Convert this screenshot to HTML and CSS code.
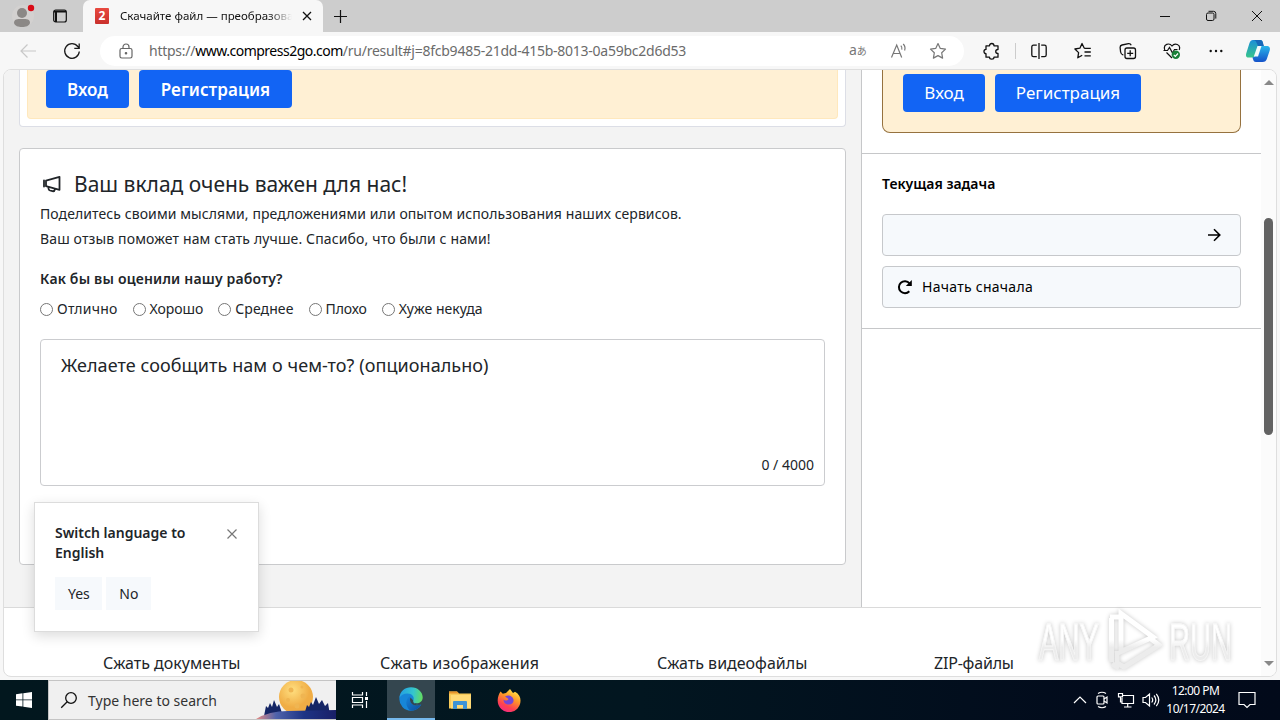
FILE: index.html
```html
<!DOCTYPE html>
<html lang="ru">
<head>
<meta charset="utf-8">
<meta name="viewport" content="width=device-width, initial-scale=1.0">
<title>Скачайте файл</title>
<link rel="stylesheet" href="styles.css">
</head>
<body>

<div class="desktop">

<!-- tab strip -->
<header class="tabs">
    <div class="tabs_left">
        <svg class="avatar" width="24" height="24" viewBox="0 0 24 24"><circle cx="12" cy="12" r="11" fill="#d3d1d0"/><circle cx="11" cy="9" r="5" fill="#8b8886"/><path d="M3 19c0-4 3-4 8-4s8 0 8 4c-1 3-4 4-8 4s-7-1-8-4z" fill="#8b8886"/><circle cx="20" cy="4" r="3.2" fill="#d90b16"/></svg>
        <svg width="16" height="16" viewBox="0 0 16 16" fill="none" stroke="#111" stroke-width="1.2"><rect x="1.700" y="2" width="12.600" height="12" rx="2"/><path d="M2 3.500h12M4 4v10" stroke-width="2"/></svg>
    </div>
    <div class="tab">
        <span class="favicon">2</span>
        <span class="tab_title">Скачайте файл — преобразова</span>
        <svg width="10" height="10" viewBox="0 0 10 10" stroke="#111" stroke-width="1.300"><path d="M1 1l8 8M9 1l-8 8"/></svg>
    </div>
    <svg class="tab_new" width="15" height="15" viewBox="0 0 15 15" stroke="#111" stroke-width="1.200"><path d="M7.500 1v13M1 7.500h13"/></svg>
    <div class="window_buttons">
        <svg width="12" height="12" viewBox="0 0 12 12" stroke="#111" fill="none"><path d="M1 6.500h10"/></svg>
        <svg width="12" height="12" viewBox="0 0 12 12" stroke="#111" fill="none"><rect x="1.500" y="3" width="7.500" height="7.500" rx="1.500"/><path d="M3.500 1.300h5q2.300 0 2.300 2.300v5"/></svg>
        <svg width="12" height="12" viewBox="0 0 12 12" stroke="#111" fill="none"><path d="M1 1l10 10M11 1L1 11"/></svg>
    </div>
</header>

<!-- toolbar -->
<div class="toolbar">
    <svg class="back" width="18" height="16" viewBox="0 0 18 16" fill="none" stroke="#c8c8c8" stroke-width="1.200"><path d="M17 8H2M8.500 1.500L2 8l6.500 6.500"/></svg>
    <svg class="reload" width="18" height="18" viewBox="0 0 18 18" fill="none" stroke="#1a1a1a" stroke-width="1.300"><path d="M16.300 9.500A7.300 7.300 0 1 1 14.800 4.500L16 6.200M16.200 1.500v4.900h-4.900"/></svg>
    <div class="address">
        <svg class="lock" width="14" height="16" viewBox="0 0 14 16" fill="none" stroke="#666" stroke-width="1.200"><rect x="1" y="5.500" width="12" height="9.500" rx="1.700"/><path d="M4 5.500V4a3 3 0 0 1 6 0v1.500"/><circle cx="7" cy="10.200" r=".7" fill="#666"/></svg>
        <span class="url">https://<b>www.compress2go.com</b>/ru/result#j=8fcb9485-21dd-415b-8013-0a59bc2d6d53</span>
        <span class="translate">a<small>あ</small></span>
        <svg class="read" width="18" height="18" viewBox="0 0 18 18" fill="none" stroke="#777" stroke-width="1.200"><path d="M1.500 15.500L6.700 3l5 12.500M3.300 11.500h6.800M10.800 3.600q1.700 1.700 1 4M13.200 2q2.700 2.600 1.400 6.500"/></svg>
        <svg class="star" width="18" height="18" viewBox="0 0 18 18" fill="none" stroke="#777" stroke-width="1.200" stroke-linejoin="round"><path d="M9 1.500l2.300 4.900 5.200.7-3.800 3.700.9 5.300L9 13.600l-4.600 2.500.9-5.300L1.500 7.100l5.200-.7z"/></svg>
    </div>
    <div class="tools">
        <svg width="18" height="18" viewBox="0 0 18 18" fill="none" stroke="#111" stroke-width="1.300" stroke-linejoin="round"><path d="M3 3.800h3.500C6.500.7 11 .7 11 3.800h4v3.700c-3 0-3 4 0 4v3.700h-4c0 2.500-4.500 2.500-4.500 0H3v-3.500c-2.700 0-2.700-4.300 0-4.300z"/></svg>
        <i class="divider"></i>
        <svg width="18" height="18" viewBox="0 0 18 18" fill="none" stroke="#111" stroke-width="1.300"><path d="M6.800 3.200H3.500Q1.800 3.200 1.800 5v8q0 1.700 1.700 1.700h3.300M11.200 3.200h3.300q1.700 0 1.700 1.800v8q0 1.700-1.700 1.700h-3.300M9 1v16"/></svg>
        <svg width="18" height="18" viewBox="0 0 18 18" fill="none" stroke="#111" stroke-width="1.300" stroke-linejoin="round"><path d="M10.300 6.300L8 1.500 5.900 6.200l-5 .8 3.700 3.600-.8 5.200 4.400-2.600M10.300 6.300h6.500M10.500 10h6.300M10.500 13.800h6.300"/></svg>
        <svg width="18" height="18" viewBox="0 0 18 18" fill="none" stroke="#111" stroke-width="1.300"><rect x="6" y="6" width="10.500" height="10.500" rx="2"/><path d="M11.200 8.300v6M8.200 11.300h6M4.300 13Q2 12.500 1.600 10L1.100 5.500Q1 3.500 3 3l6.500-1.300q2-.2 2.700 1.600"/></svg>
        <svg width="18" height="18" viewBox="0 0 18 18" fill="none" stroke="#111" stroke-width="1.200"><path d="M1.800 8C-.3 1.800 6.500.5 9 4c2.500-3.500 9.300-2 7.200 4M3.500 10.500L9 16M.5 8.500h4l2-3 3 5.500 2-3.500h3"/><circle cx="12.800" cy="12.800" r="4.200" fill="#198038" stroke="none"/><path d="M10.800 12.800l1.500 1.500 2.700-2.800" stroke="#fff"/></svg>
        <svg width="18" height="18" viewBox="0 0 18 18" fill="#111"><circle cx="3.700" cy="9" r="1.200"/><circle cx="9" cy="9" r="1.200"/><circle cx="14.300" cy="9" r="1.200"/></svg>
    </div>
    <svg class="copilot" width="26" height="24" viewBox="0 0 26 24">
        <defs>
            <linearGradient id="cp1" x1="0" y1="0" x2="0" y2="1"><stop offset="0" stop-color="#1b8fd8"/><stop offset="1" stop-color="#38c58c"/></linearGradient>
            <linearGradient id="cp2" x1="0" y1="0" x2="0" y2="1"><stop offset="0" stop-color="#2ab6ea"/><stop offset="1" stop-color="#1552c9"/></linearGradient>
        </defs>
        <path d="M8 1h7c2 0 2.500 1 3 3l-4 2-4 11c-.5 1-1.500 1.500-3 1.500H3.500C1 18.500.500 16.500 1.500 13.500L4.500 4Q5.500 1 8 1z" fill="url(#cp1)"/>
        <path d="M8 1h7c2 0 2.500 1 3 3l1 3h-6L11 2.500Q10.300 1 8 1z" fill="#1769b9"/>
        <path d="M16 7h5.500c3 0 4 1.800 3.200 4.500L22 19.500Q21 23 17.500 23H11c-2 0-2.500-1-3-3l-.6-1.500Q10 18 10.800 16l2.700-7Q14.200 7 16 7z" fill="url(#cp2)"/>
        <path d="M12.500 7h4l-3.500 10.500H8.800z" fill="#f2fafa"/>
    </svg>
</div>

<!-- page -->
<div class="page">
    <div class="content">
        <div class="columns">
            <main class="main">
                <section class="notice_card">
                    <div class="notice">
                        <button class="btn btn_bold">Вход</button>
                        <button class="btn btn_bold btn_wide">Регистрация</button>
                    </div>
                </section>
                <section class="feedback">
                    <h2><svg width="20" height="18" viewBox="0 0 20 18" fill="none" stroke="#212529" stroke-width="1.800" stroke-linejoin="round"><path d="M4 5.700L17.500 1.800v13L4 11.200z"/><path d="M2 5.500v6M6.500 12v1.500q0 1.500 1.500 2l2.500.7q2 .3 2.500-2" stroke-linecap="round"/></svg><span>Ваш вклад очень важен для нас!</span></h2>
                    <p><span class="line1">Поделитесь своими мыслями, предложениями или опытом использования наших сервисов.</span><br><span class="line2">Ваш отзыв поможет нам стать лучше. Спасибо, что были с нами!</span></p>
                    <h3>Как бы вы оценили нашу работу?</h3>
                    <div class="ratings">
                        <label><input type="radio" name="rate">Отлично</label>
                        <label><input type="radio" name="rate">Хорошо</label>
                        <label><input type="radio" name="rate">Среднее</label>
                        <label><input type="radio" name="rate">Плохо</label>
                        <label><input type="radio" name="rate">Хуже некуда</label>
                    </div>
                    <div class="message">
                        <span class="message_hint">Желаете сообщить нам о чем-то? (опционально)</span>
                        <span class="message_count">0 / 4000</span>
                    </div>
                </section>
            </main>
            <aside class="side">
                <div class="side_top">
                    <div class="side_notice">
                        <button class="btn">Вход</button>
                        <button class="btn btn_wide">Регистрация</button>
                    </div>
                </div>
                <div class="task">
                    <h4>Текущая задача</h4>
                    <div class="task_row task_next"><svg width="14" height="14" viewBox="0 0 14 14" fill="none" stroke="#000" stroke-width="1.600"><path d="M1 7h11.500M7 1.200L12.800 7 7 12.800"/></svg></div>
                    <div class="task_row"><svg width="16" height="16" viewBox="0 0 16 16" fill="none" stroke="#000" stroke-width="2"><path d="M12.300 12.300A6 6 0 1 1 12.500 4.300"/><path d="M14.800 1v6H8.800z" fill="#000" stroke="none"/></svg><span>Начать сначала</span></div>
                </div>
            </aside>
        </div>
        <footer class="footer">
            <span class="f1">Сжать документы</span>
            <span class="f2">Сжать изображения</span>
            <span class="f3">Сжать видеофайлы</span>
            <span class="f4">ZIP-файлы</span>
        </footer>
    </div>
    <div class="scrollbar"><i class="arrow_up"></i><i class="thumb"></i><i class="arrow_down"></i></div>
</div>

<!-- taskbar -->
<div class="taskbar">
    <div class="start"><svg width="16" height="16" viewBox="0 0 16 16" fill="#fff"><path d="M0 2.200L6.500 1.300v6.200H0zM7.300 1.200L16 0v7.500H7.300zM0 8.300h6.500v6.300L0 13.700zM7.300 8.300H16V16l-8.700-1.200z"/></svg></div>
    <div class="search">
        <svg width="18" height="18" viewBox="0 0 18 18" fill="none" stroke="#111" stroke-width="1.300"><circle cx="11" cy="7" r="5.300"/><path d="M7.200 10.800L1.200 16.800"/></svg>
        <span>Type here to search</span>
        <svg class="moon" width="80" height="38" viewBox="0 0 80 38">
            <defs>
                <linearGradient id="hill" x1="0" y1="0" x2="1" y2="0"><stop offset="0" stop-color="#e98c83"/><stop offset=".25" stop-color="#4f63ab"/><stop offset=".6" stop-color="#1d3485"/><stop offset="1" stop-color="#191f67"/></linearGradient>
                <radialGradient id="lune" cx=".4" cy=".3"><stop offset="0" stop-color="#ffdf80"/><stop offset="1" stop-color="#f0ad45"/></radialGradient>
            </defs>
            <circle cx="40" cy="16" r="17" fill="url(#lune)"/>
            <g fill="#efb552"><circle cx="35" cy="9" r="2.500"/><circle cx="47" cy="15" r="2.500"/><circle cx="32" cy="19" r="2"/><circle cx="41" cy="25" r="2.500"/><circle cx="46" cy="6" r="1.500"/></g>
            <path d="M8 35l2-10 2 2 2-5 2 4 2-7 3 7 2-3 4 12zM48 34l3-10 2 2 2-5 2 3 3-8 3 7 3-4 3 6 3-3 2 12z" fill="#142565"/>
            <path d="M0 38q13-8 32-8l48-1v9z" fill="url(#hill)"/>
        </svg>
    </div>
    <div class="app"><svg width="18" height="18" viewBox="0 0 18 18" fill="none" stroke="#fff" stroke-width="1.200"><path d="M1.500 1v3h10V1M1.500 17v-3h10v3M1.500 6.500h10v5h-10zM15.500 1v4M15.500 10v7"/><path d="M14 6h3v3h-3z" fill="#fff" stroke="none"/></svg></div>
    <div class="app app_active"><svg width="24" height="24" viewBox="0 0 24 24">
        <defs>
            <linearGradient id="ed1" x1="0" y1=".3" x2="1" y2=".4"><stop offset="0" stop-color="#229ee5"/><stop offset=".6" stop-color="#35c6cc"/><stop offset="1" stop-color="#62dc62"/></linearGradient>
            <linearGradient id="ed2" x1="0" y1="0" x2="1" y2="1"><stop offset="0" stop-color="#1683db"/><stop offset="1" stop-color="#0c4b98"/></linearGradient>
        </defs>
        <path d="M.4 11C1 6 5 4 12 4c4 3 5 8 3 11 1 3 4 3 7.300 2.500C20 21.500 16.500 23.700 12 23.700A11.700 11.700 0 0 1 .4 11z" fill="#1786d8"/>
        <path d="M11 9c-5 3-5 10 0 14.600 5 .5 9-2 11.300-6C17 20 12 18 11.500 13.500z" fill="url(#ed2)"/>
        <path d="M.4 11C1 4 6 .3 12 .3c7 0 11.700 5 11.700 10 0 4-3 6-6.200 6-3 0-4.200-1.300-3.200-2.800C16 10 13 6.500 8.500 6.500 4.500 6.500 1.500 8.500.4 11z" fill="url(#ed1)"/>
        <path d="M11.500 10.500c-1 2-.5 4.500 1.500 6.500 3 2 6.500 1.800 9.300.5-4 .5-8.800-.5-8-4z" fill="#34464f"/>
    </svg></div>
    <div class="app"><svg width="22" height="20" viewBox="0 0 22 20"><path d="M0 1.500h8l2 2h12v15H0z" fill="#f7ca59"/><path d="M0 1.500h8l2 2H0z" fill="#e7942b"/><path d="M2 5h20v13.500H2z" fill="#ffda76"/><path d="M4 19v-7q0-1 1-1h12q1 0 1 1v7h-4v-4H8v4z" fill="#3d93d6"/></svg></div>
    <div class="app"><svg width="24" height="24" viewBox="0 0 24 24">
        <defs><linearGradient id="ff" x1=".8" y1="0" x2=".3" y2="1"><stop offset="0" stop-color="#fff04d"/><stop offset=".4" stop-color="#ff9828"/><stop offset=".75" stop-color="#ff4150"/><stop offset="1" stop-color="#f42a83"/></linearGradient></defs>
        <path d="M3.500 3.500l2.300 2.300L9 5l4-4 3 4 2-1.300C22 6 23.500 9 23.500 12.500A11.400 11.400 0 0 1 .7 13C.5 9 2 6 3.500 3.500z" fill="url(#ff)"/>
        <path d="M8 8.500q4-2 7 .5c3 3 1.500 7.500-3 7.500-3.500 0-5.500-2-5.500-5 1 1.300 4 1.500 5-.500z" fill="#7446d8"/>
    </svg></div>
    <div class="tray">
        <svg width="14" height="14" viewBox="0 0 14 14" fill="none" stroke="#fff" stroke-width="1.200"><path d="M1 10l6-6 6 6"/></svg>
        <svg width="16" height="18" viewBox="0 0 16 18" fill="none" stroke="#fff" stroke-width="1.200"><rect x="3" y="5" width="7" height="8" rx="1"/><path d="M10 8l3-2v6l-3-2M4 2.500q4-2.500 8 0M4 15.500q4 2.500 8 0"/></svg>
        <svg width="18" height="16" viewBox="0 0 18 16" fill="none" stroke="#fff" stroke-width="1.200"><path d="M6 3.500h10.500v8H5V6M10.700 11.500V15M7 15h7.500M1.500 1.500h4v3.300h-4zM3.500 5v5H5"/></svg>
        <svg width="18" height="16" viewBox="0 0 18 16" fill="none" stroke="#fff" stroke-width="1.200"><path d="M1 5.500h2.500L7.500 2v12l-4-3.500H1zM9.700 5.500q2 2.500 0 5M12 3.500q3.700 4.500 0 9M14.300 1.800q5 6.200 0 12.400"/></svg>
        <div class="clock"><span class="time">12:00 PM</span><span>10/17/2024</span></div>
        <svg class="action" width="18" height="18" viewBox="0 0 18 18" fill="none" stroke="#fff" stroke-width="1.200"><path d="M1 1.500h16v12h-5l-3 3-3-3H1z"/></svg>
    </div>
</div>

<!-- language popup -->
<div class="popup">
    <div class="popup_head">
        <strong>Switch language to<br>English</strong>
        <svg width="10" height="10" viewBox="0 0 10 10" stroke="#777" stroke-width="1.200"><path d="M.5.5l9 9M9.500.5l-9 9"/></svg>
    </div>
    <div class="popup_buttons">
        <button>Yes</button>
        <button>No</button>
    </div>
</div>

<div class="watermark">
    <span>ANY</span>
    <svg width="56" height="64" viewBox="0 0 56 64" fill="none" stroke="url(#wm)" stroke-width="5">
        <defs><linearGradient id="wm" gradientUnits="userSpaceOnUse" x1="0" y1="0" x2="0" y2="64"><stop offset=".48" stop-color="#fff"/><stop offset=".6" stop-color="#ececec"/></linearGradient></defs>
        <path d="M14 4.500v38l32-14.500zM4.500 9v44M12 8H3M10 42v12l7 4 35-22-8-6M12 59l-7-4"/>
    </svg>
    <span>RUN</span>
</div>

</div>

</body>
</html>
```
FILE: styles.css
```css
*, *:after, *:before {
  box-sizing: border-box;
}
body {
  margin: 0;
  font-family: "Noto Sans", "Open Sans", sans-serif;
  font-size: 14px;
  color: #212529;
}
h2, h3, h4, p {
  margin: 0;
}
svg {
  display: block;
  flex: none;
}
button {
  font-family: inherit;
  border: 0;
}
.desktop {
  position: relative;
  width: 1280px;
  height: 720px;
  overflow: hidden;
  background: #f7f7f7;
  white-space: nowrap;
  display: flex;
  flex-direction: column;
}

/* tab strip */
.tabs {
  height: 32px;
  flex: none;
  background: #cdcdcd;
  display: flex;
  align-items: center;
}
.tabs_left {
  width: 83px;
  height: 32px;
  padding-left: 11px;
  display: flex;
  align-items: center;
  gap: 17px;
}
.tab {
  width: 240px;
  height: 32px;
  padding: 0 11px 0 12px;
  background: #f7f7f7;
  border-radius: 7px 7px 0 0;
  display: flex;
  align-items: center;
}
.favicon {
  width: 14px;
  height: 16px;
  margin-right: 11px;
  background: linear-gradient(#e8493f, #c9302c);
  border-radius: 1px;
  color: #fff;
  font-size: 12px;
  font-weight: bold;
  line-height: 16px;
  text-align: center;
}
.tab_title {
  width: 173px;
  margin-right: 10px;
  padding-bottom: 2px;
  overflow: hidden;
  font-size: 11.5px;
  color: #111;
  -webkit-mask-image: linear-gradient(90deg, #000 86%, transparent);
  mask-image: linear-gradient(90deg, #000 86%, transparent);
}
.tab_new {
  margin-left: 10px;
}
.window_buttons {
  margin-left: auto;
  padding-right: 17px;
  display: flex;
  gap: 34px;
}

/* toolbar */
.toolbar {
  height: 37px;
  flex: none;
  padding-left: 19px;
  display: flex;
  align-items: center;
}
.reload {
  margin-left: 26px;
}
.address {
  width: 864px;
  height: 30px;
  margin-left: 19px;
  padding-left: 19px;
  background: #fff;
  border-radius: 15px;
  display: flex;
  align-items: center;
}
.url {
  width: 716px;
  padding-left: 16px;
  font-size: 14px;
  letter-spacing: -.25px;
  color: #6b6b6b;
}
.url b {
  font-weight: normal;
  letter-spacing: -.5px;
  color: #000;
}
.translate {
  width: 41px;
  font-size: 14px;
  line-height: 16px;
  color: #777;
  font-family: "Noto Sans", "Noto Sans CJK JP", sans-serif;
}
.translate small {
  font-size: 10px;
}
.star {
  margin-left: 21px;
}
.tools {
  margin-left: 19px;
  width: 242px;
  display: flex;
  align-items: center;
  justify-content: space-between;
}
.divider {
  width: 1px;
  height: 16px;
  margin: 0 -12px;
  background: #ccc;
}
.copilot {
  margin-left: 20px;
}

/* page frame */
.page {
  width: 1274px;
  height: 608px;
  flex: none;
  margin-left: 3px;
  border: 1px solid #dedede;
  border-radius: 8px;
  background: #fff;
  overflow: hidden;
  display: flex;
}
.content {
  width: 1257px;
}
.columns {
  display: flex;
  height: 538px;
  border-bottom: 1px solid #dadada;
}
.main {
  width: 857px;
  padding: 0 15px;
  background: #f3f3f3;
}
.notice_card {
  height: 57px;
  padding: 0 7px;
  background: #fff;
  border: 1px solid #dcdee6;
  border-top: 0;
  border-radius: 0 0 4px 4px;
}
.notice {
  height: 49px;
  padding-left: 18px;
  background: #fff0d4;
  border: 1px solid #ffe8bd;
  border-top: 0;
  border-radius: 0 0 4px 4px;
  display: flex;
  gap: 10px;
}
.btn {
  width: 82px;
  height: 38px;
  padding: 0 0 2px;
  border-radius: 4px;
  background: #1264f4;
  color: #fff;
  font-size: 17px;
}
.btn_wide {
  width: 146px;
}
.btn_bold {
  width: 83px;
  padding: 0;
  font-weight: 600;
}
.btn_bold.btn_wide {
  width: 153px;
  letter-spacing: .1px;
}
.feedback {
  height: 417px;
  margin-top: 21px;
  padding: 20px;
  background: #fff;
  border: 1px solid #c9cacc;
  border-radius: 4px;
}
.feedback h2 {
  height: 32px;
  padding: 0 0 2px 2px;
  display: flex;
  align-items: center;
  gap: 12px;
  font-size: 21px;
  font-weight: normal;
}
.feedback p {
  line-height: 25px;
}
.line1 {
  letter-spacing: .085px;
}
.line2 {
  letter-spacing: .14px;
}
.feedback h3 {
  margin-top: 16px;
  line-height: 24px;
  font-size: 14px;
  font-weight: 600;
  letter-spacing: .18px;
}
.ratings {
  height: 20px;
  margin-top: 8px;
  display: flex;
  align-items: center;
  gap: 15px;
}
.ratings label {
  padding-bottom: 1px;
  display: flex;
  align-items: center;
  gap: 4px;
  letter-spacing: .25px;
}
.ratings label:nth-child(2) {
  letter-spacing: -.05px;
}
.ratings label:nth-child(3) {
  letter-spacing: .1px;
}
.ratings label:nth-child(4) {
  letter-spacing: -.1px;
}
.ratings label:nth-child(5) {
  letter-spacing: .05px;
}
.ratings input {
  width: 13px;
  height: 13px;
  margin: 1px 0 0;
}
.message {
  height: 147px;
  margin-top: 20px;
  padding: 12px 10px 8px 20px;
  border: 1px solid #cbcccf;
  border-radius: 4px;
  display: flex;
  flex-direction: column;
  justify-content: space-between;
}
.message_hint {
  font-size: 18px;
  line-height: 26px;
  letter-spacing: .07px;
}
.message_count {
  align-self: flex-end;
  line-height: 24px;
}

/* side column */
.side {
  width: 400px;
  border-left: 1px solid #c6c7c9;
  background: #fff;
}
.side_top {
  height: 84px;
  padding: 0 20px;
  border-bottom: 1px solid #c6c7c9;
}
.side_notice {
  height: 63px;
  padding: 4px 20px 0;
  background: #fff0d4;
  border: 1px solid #96723f;
  border-top: 0;
  border-radius: 0 0 8px 8px;
  display: flex;
  gap: 10px;
}
.task {
  height: 175px;
  padding: 20px 20px 0;
  border-bottom: 1px solid #c6c7c9;
}
.task h4 {
  height: 20px;
  margin-bottom: 20px;
  line-height: 20px;
  font-size: 14px;
  font-weight: 600;
  color: #000;
}
.task_row {
  height: 42px;
  margin-bottom: 10px;
  padding: 0 19px 0 14px;
  background: #f6f9fc;
  border: 1px solid #c6c8cb;
  border-radius: 4px;
  display: flex;
  align-items: center;
  gap: 9px;
  color: #000;
}
.task_row span {
  padding-bottom: 2px;
  letter-spacing: .27px;
}
.task_next {
  justify-content: flex-end;
}

/* footer links */
.footer {
  padding: 43px 0 0 99px;
  display: grid;
  grid-template-columns: 277px 277px 277px 277px;
  font-size: 16px;
  line-height: 24px;
}
.f2 {
  letter-spacing: .2px;
}
.f4 {
  letter-spacing: -.2px;
}

/* scrollbar */
.scrollbar {
  width: 15px;
  background: #fbfbfb;
  display: flex;
  flex-direction: column;
  align-items: center;
}
.arrow_up, .arrow_down {
  border: 5px solid transparent;
  border-top: 0;
  border-bottom: 5px solid #888;
}
.arrow_up {
  margin-top: 10px;
}
.arrow_down {
  margin-top: 226px;
  border-bottom: 0;
  border-top: 5px solid #888;
}
.thumb {
  width: 9px;
  height: 217px;
  margin-top: 133px;
  border-radius: 5px;
  background: #626262;
}

/* taskbar */
.taskbar {
  height: 40px;
  margin-top: 3px;
  flex: none;
  background: linear-gradient(90deg, #02171e, #021620 50%, #020b1c 85%, #020a1a);
  display: flex;
}
.start {
  width: 48px;
  display: flex;
  align-items: center;
  justify-content: center;
}
.search {
  width: 288px;
  padding-left: 11px;
  background: #f0f0f0;
  border: 1px solid #c4c4c4;
  border-right: 0;
  display: flex;
  align-items: center;
  font-size: 14px;
  color: #333;
}
.search span {
  width: 167px;
  padding-left: 10px;
}
.moon {
  margin-left: auto;
}
.app {
  width: 48px;
  margin-right: 1px;
  display: flex;
  align-items: center;
  justify-content: center;
}
.app_active {
  margin-left: 2px;
  background: #34464f;
  border-bottom: 2px solid #76b9ed;
}
.tray {
  margin-left: auto;
  padding-right: 24px;
  display: flex;
  align-items: center;
  gap: 7px;
  color: #fff;
}
.clock {
  width: 57px;
  font-size: 12px;
  line-height: 18px;
  letter-spacing: -.55px;
  display: flex;
  flex-direction: column;
  align-items: center;
}
.action {
  margin-left: 7px;
}

/* language popup */
.popup {
  position: absolute;
  left: 34px;
  top: 502px;
  width: 225px;
  height: 130px;
  padding: 20px;
  background: #fff;
  border: 1px solid #dcdcdc;
  box-shadow: 0 4px 12px rgba(0, 0, 0, .14);
}
.popup_head {
  height: 54px;
  display: flex;
  justify-content: space-between;
  line-height: 20px;
}
.popup_head strong {
  font-weight: 600;
}
.popup_head svg {
  margin: 6px 1px 0 0;
}
.popup_buttons {
  display: flex;
  gap: 4px;
}
.popup button {
  height: 33px;
  padding: 0 12.5px 0 13px;
  background: #f6f9fc;
  font-size: 14px;
  color: #212529;
}

.watermark {
  position: absolute;
  left: 1039px;
  top: 608px;
  display: flex;
  align-items: center;
  gap: 6px;
  font: 52px/64px "Liberation Sans", sans-serif;
  filter: drop-shadow(0 0 2px rgba(0, 0, 0, .22));
}
.watermark span {
  display: block;
  width: 110px;
  margin-right: -48px;
  padding-top: 2px;
  transform: scaleX(.56);
  transform-origin: left;
  color: transparent;
  -webkit-text-stroke: 1px #f6f6f6;
  background: linear-gradient(#fff 48%, #ececec 60%);
  -webkit-background-clip: text;
  background-clip: text;
}
```
